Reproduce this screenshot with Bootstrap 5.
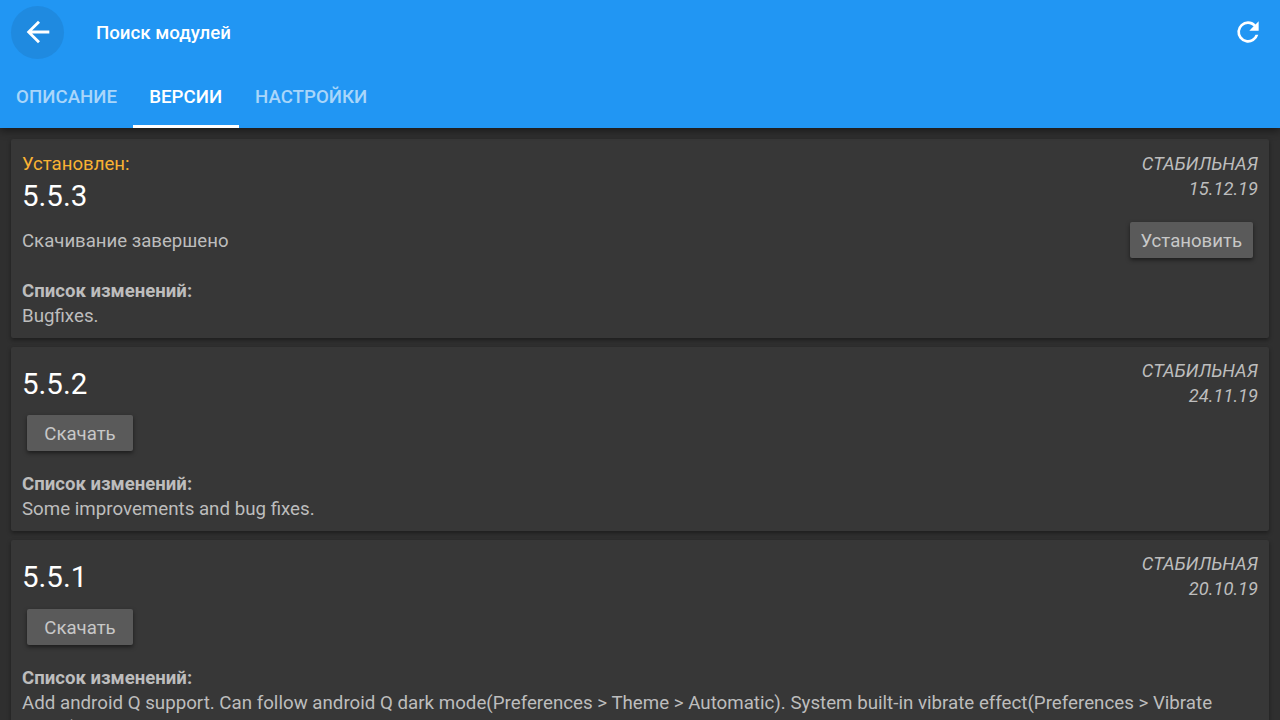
<!DOCTYPE html>
<html lang="ru">

<head>
    <meta charset="UTF-8">
    <meta name="viewport" content="width=device-width, initial-scale=1.0">
    <title>Поиск модулей</title>
    <link href="https://cdn.jsdelivr.net/npm/bootstrap@5.3.2/dist/css/bootstrap.min.css" rel="stylesheet">
    <style>
        html, body { height: 720px; overflow: hidden; }
        body { background: #2f2f2f; font-family: Roboto, "Liberation Sans", sans-serif; font-size: 18.6px; line-height: 25px; color: #bdbdbd; }
        .app-head { background: #2196f3; height: 128px; box-shadow: 0 3px 8px rgba(0, 0, 0, .45); position: relative; }
        .top-row { height: 64px; padding: 0 16px 0 11px; }
        .back-btn { width: 53px; height: 53px; border-radius: 50%; background: #1f8ae0; }
        .head-title { font-size: 18.7px; font-weight: 500; color: #fff; margin: 2px 0 0 32px; }
        .tab-row { height: 64px; }
        .tab-item { padding: 0 16.1px; line-height: 67px; font-size: 18.7px; font-weight: 500; color: #a9d6fa; height: 64px; }
        .tab-item.on { color: #fff; border-bottom: 3px solid #fff; padding-right: 16.8px; }
        .ver-list { padding: 11px 11px 0; gap: 9px; }
        .ver-card { background: #373737; padding: 13px 11px 9px; box-shadow: 0 2px 4px rgba(0, 0, 0, .4); border-radius: 2px; }
        .inst-label { color: #f9b233; }
        .ver-num { font-size: 29.5px; line-height: 36px; color: #fff; }
        .num-first { margin-top: 1px; }
        .num-only { margin-top: 6px; }
        .ver-meta { font-size: 18.3px; font-style: italic; text-align: right; margin-top: -1px; }
        .ver-meta.up { margin-top: -2px; margin-bottom: 1px; }
        .status-row { margin-top: 8px; }
        .status-text { padding-top: 2px; }
        .act-btn { background: #5a5a5a; color: #c8c8c8; font-size: 18.6px; line-height: 25px; height: 36px; border: 0; border-radius: 2px; padding: 2px 11px 0; box-shadow: 0 2px 4px rgba(0, 0, 0, .5); }
        .act-btn.inst { margin-right: 5px; }
        .act-btn.dl { width: 106px; margin: 6.4px 0 0 5px; padding: 3px 0 0; }
        .log-head { font-weight: 700; margin-top: 21px; }
        .log-text { font-size: 18.73px; }
    </style>
</head>

<body>
    <!-- Header -->
    <div class="app-head">
        <div class="top-row d-flex align-items-center">
            <div class="back-btn d-flex align-items-center justify-content-center">
                <svg width="34" height="34" viewBox="0 0 24 24" fill="#fff"><path d="M20 11H7.83l5.59-5.59L12 4l-8 8 8 8 1.41-1.41L7.83 13H20v-2z"/></svg>
            </div>
            <div class="head-title flex-grow-1">Поиск модулей</div>
            <svg width="32" height="32" viewBox="0 0 24 24" fill="#fff"><path d="M17.65 6.35A7.96 7.96 0 0 0 12 4a8 8 0 1 0 7.73 10h-2.08A6 6 0 1 1 12 6c1.66 0 3.14.69 4.22 1.78L13 11h7V4l-2.35 2.35z"/></svg>
        </div>
        <div class="tab-row d-flex">
            <div class="tab-item">ОПИСАНИЕ</div>
            <div class="tab-item on">ВЕРСИИ</div>
            <div class="tab-item">НАСТРОЙКИ</div>
        </div>
    </div>

    <!-- Versions -->
    <div class="ver-list d-flex flex-column">
        <div class="ver-card">
            <div class="d-flex justify-content-between">
                <div>
                    <div class="inst-label">Установлен:</div>
                    <div class="ver-num num-first">5.5.3</div>
                </div>
                <div class="ver-meta">СТАБИЛЬНАЯ<br>15.12.19</div>
            </div>
            <div class="status-row d-flex justify-content-between align-items-center">
                <div class="status-text">Скачивание завершено</div>
                <button class="act-btn inst">Установить</button>
            </div>
            <div class="log-head">Список изменений:</div>
            <div class="log-text">Bugfixes.</div>
        </div>

        <div class="ver-card">
            <div class="d-flex justify-content-between">
                <div class="ver-num num-only">5.5.2</div>
                <div class="ver-meta up">СТАБИЛЬНАЯ<br>24.11.19</div>
            </div>
            <button class="act-btn dl d-block">Скачать</button>
            <div class="log-head">Список изменений:</div>
            <div class="log-text">Some improvements and bug fixes.</div>
        </div>

        <div class="ver-card">
            <div class="d-flex justify-content-between">
                <div class="ver-num num-only">5.5.1</div>
                <div class="ver-meta up">СТАБИЛЬНАЯ<br>20.10.19</div>
            </div>
            <button class="act-btn dl d-block">Скачать</button>
            <div class="log-head">Список изменений:</div>
            <div class="log-text">Add android Q support. Can follow android Q dark mode(Preferences &gt; Theme &gt; Automatic). System built-in vibrate effect(Preferences &gt; Vibrate effect)</div>
        </div>
    </div>

    <script src="https://cdn.jsdelivr.net/npm/bootstrap@5.3.2/dist/js/bootstrap.bundle.min.js"></script>
</body>

</html>
